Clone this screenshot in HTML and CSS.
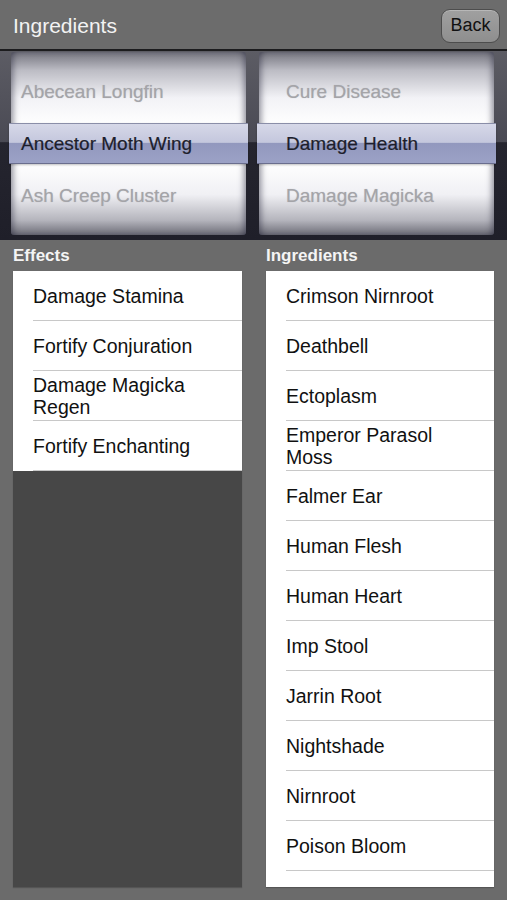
FILE: index.html
```html
<!DOCTYPE html>
<html>
<head>
<meta charset="utf-8">
<link rel="stylesheet" href="styles.css">
</head>
<body>
<header class="nav">
  <h1 class="nav-title">Ingredients</h1>
  <button class="back-btn">Back</button>
</header>
<section class="picker">
  <div class="wheel">
    <div class="wheel-row dim">Abecean Longfin</div>
    <div class="wheel-row sel">Ancestor Moth Wing</div>
    <div class="wheel-row dim">Ash Creep Cluster</div>
    <div class="sel-bar"></div>
  </div>
  <div class="divider"></div>
  <div class="wheel">
    <div class="wheel-row dim right">Cure Disease</div>
    <div class="wheel-row sel right">Damage Health</div>
    <div class="wheel-row dim right">Damage Magicka</div>
    <div class="sel-bar"></div>
  </div>
</section>
<main class="columns">
  <div class="col">
    <div class="col-label">Effects</div>
    <div class="panel dark">
      <ul class="list">
        <li>Damage Stamina</li>
        <li>Fortify Conjuration</li>
        <li>Damage Magicka Regen</li>
        <li>Fortify Enchanting</li>
      </ul>
    </div>
  </div>
  <div class="col">
    <div class="col-label">Ingredients</div>
    <div class="panel">
      <ul class="list">
        <li>Crimson Nirnroot</li>
        <li>Deathbell</li>
        <li>Ectoplasm</li>
        <li>Emperor Parasol Moss</li>
        <li>Falmer Ear</li>
        <li>Human Flesh</li>
        <li>Human Heart</li>
        <li>Imp Stool</li>
        <li>Jarrin Root</li>
        <li>Nightshade</li>
        <li>Nirnroot</li>
        <li>Poison Bloom</li>
      </ul>
    </div>
  </div>
</main>
</body>
</html>
```
FILE: styles.css
```css
* { box-sizing: border-box; }
html, body { margin: 0; padding: 0; }
body {
  width: 507px;
  height: 900px;
  overflow: hidden;
  background: #6b6b6b;
  font-family: "Liberation Sans", Arial, sans-serif;
}
.nav {
  height: 51px;
  display: flex;
  align-items: center;
  justify-content: space-between;
  padding: 2px 7px 0 13px;
  background: #6c6c6c;
  border-bottom: 2px solid #1c1c1e;
}
.nav-title {
  margin: 0;
  font-size: 21px;
  font-weight: normal;
  color: #f3f3f3;
  padding-top: 1px;
}
.back-btn {
  width: 59px;
  height: 34px;
  border: 1px solid #4d4d4d;
  border-radius: 9px;
  background: linear-gradient(#a0a0a0, #8e8e8e);
  color: #111;
  font-family: "Liberation Sans", Arial, sans-serif;
  font-size: 18px;
  padding: 0;
  box-shadow: inset 0 1px 0 rgba(255,255,255,0.25);
}
.picker {
  height: 189px;
  display: flex;
  padding: 1px 12px 5px 11px;
  background:
    linear-gradient(#5c5c64 0%, #4a4a54 48%, #25252f 48.5%, #1f1f29 100%);
}
.wheel {
  position: relative;
  width: 235px;
  height: 183px;
  display: flex;
  flex-direction: column;
  justify-content: center;
  border-radius: 3px;
  background: linear-gradient(#74747e 0%, #bcbcc4 10%, #f2f2f6 25%, #ffffff 40%, #ffffff 60%, #f0f0f4 78%, #b4b4bc 92%, #6c6c76 100%);
  box-shadow: inset 5px 0 6px -3px rgba(30,30,50,0.5), inset -5px 0 6px -3px rgba(30,30,50,0.5);
}
.divider {
  width: 13px;
}
.wheel-row {
  height: 52px;
  line-height: 52px;
  font-size: 19px;
  padding-left: 10px;
  white-space: nowrap;
}
.wheel-row.right { padding-left: 27px; }
.wheel-row.dim {
  color: #a4a4a8;
  text-shadow: 0 0 1px rgba(160,160,170,0.6);
}
.wheel-row.sel {
  position: relative;
  z-index: 2;
  color: #1d1e2c;
  -webkit-text-stroke: 0.2px #1d1e2c;
}
.sel-bar {
  position: absolute;
  left: -2px;
  right: -2px;
  top: 71px;
  height: 41px;
  z-index: 1;
  border-top: 1px solid #8a8ea8;
  border-bottom: 1px solid #6a6e8e;
  background: linear-gradient(#d6d8e8 0%, #c4c7dd 47%, #9298be 50%, #9ca2c6 100%);
  box-shadow: 0 1px 2px rgba(0,0,0,0.25);
}
.columns {
  display: flex;
  gap: 24px;
  padding: 6px 13px 0 13px;
}
.col {
  display: flex;
  flex-direction: column;
}
.col:first-child { width: 229px; }
.col:last-child { width: 228px; }
.col-label {
  height: 20px;
  line-height: 20px;
  margin-bottom: 5px;
  font-size: 17px;
  font-weight: bold;
  color: #f4f4f4;
}
.panel {
  height: 616px;
  background: #ffffff;
  box-shadow: 0 1px 1px rgba(0,0,0,0.2);
}
.panel.dark { background: #474747; }
.list {
  list-style: none;
  margin: 0;
  padding: 0;
  background: #fff;
}
.list li {
  height: 50px;
  display: flex;
  align-items: center;
  margin-left: 20px;
  padding-right: 30px;
  font-size: 19.5px;
  line-height: 22px;
  color: #111;
  border-bottom: 1px solid #c8c8c8;
}
```
